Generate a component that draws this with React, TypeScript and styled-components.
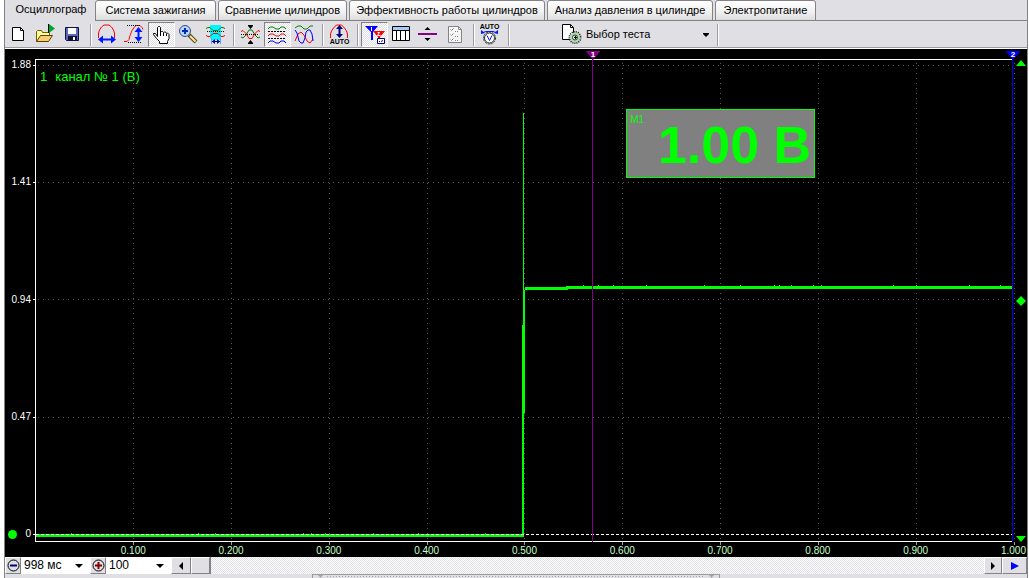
import React from 'react';
import styled, { createGlobalStyle, css } from 'styled-components';

const face = '#e0dfe3';
const line = '#848284';
const green = '#00ff00';
const dither = `repeating-conic-gradient(#fff 0 25%, ${face} 0 50%) 0 0 / 2px 2px`;

const GlobalStyle = createGlobalStyle`
  * { box-sizing: border-box; }
  body { margin: 0; background: #fff; font: 11px/13px "Liberation Sans", Arial, sans-serif; color: #000; }
  button, select { font: inherit; color: inherit; margin: 0; }
  svg { display: block; }
`;

const Window = styled.div`
  display: flex;
  flex-direction: column;
  height: 100vh;
  margin: 0 1px 0 4px;
  background: ${face};
  border: solid ${line};
  border-width: 0 1px;
  overflow: hidden;
`;

const TabBar = styled.div`
  flex: none;
  display: flex;
  gap: 2px;
  height: 21px;
  background: linear-gradient(${line}, ${line}) 90px 100% / 100% 1px no-repeat;
`;

const Tab = styled.button<{ $active?: boolean; $width: number }>`
  width: ${p => p.$width}px;
  height: 21px;
  padding: 0;
  white-space: nowrap;
  border: 1px solid ${line};
  border-radius: 3px 3px 0 0;
  background: linear-gradient(#fff, #f0f0f0 60%, #dcdcdc);
  ${p => p.$active && css`
    border-color: transparent;
    background: ${face};
    padding: 0 0 2px 4px;
  `}
`;

const Toolbar = styled.div`
  flex: none;
  display: flex;
  align-items: center;
  height: 28px;
  border-bottom: 1px solid #fff;
  box-shadow: inset 0 -1px #9c9a9c;
`;

const Tool = styled.button<{ $pressed?: boolean }>`
  width: 27px;
  height: 25px;
  padding: 1px 2px;
  border: 1px solid transparent;
  background: none;
  ${p => p.$pressed && css`
    border-color: ${line} #fff #fff ${line};
    background: ${dither};
  `}
`;

const Divider = styled.span`
  width: 8px;
  height: 22px;
  background: linear-gradient(90deg, #9c9a9c 1px, #fff 1px) 4px 0 / 2px 100% no-repeat;
`;

const TestPicker = styled.label`
  display: flex;
  align-items: center;
  gap: 2px;
  width: 201px;
  padding: 0 4px 0 49px;
`;

const FlatSelect = styled.select<{ $bg: string }>`
  flex: 1;
  min-width: 0;
  height: 17px;
  padding: 0 0 0 2px;
  border: 0;
  border-radius: 0;
  appearance: none;
  background: ${p => p.$bg};
`;

const Combo = styled.span<{ $width: number }>`
  display: flex;
  align-items: center;
  width: ${p => p.$width}px;
  padding: 0 2px 0 1px;
  background: #fff;
  font-size: 12px;
`;

const Scope = styled.main`
  flex: 1;
  min-height: 0;
  display: grid;
  grid-template-columns: 28px minmax(0, 1fr) 12px;
  grid-template-rows: minmax(0, 1fr) 12px;
  padding-top: 10px;
  background: #000;
`;

const YAxis = styled.div`
  display: flex;
  flex-direction: column;
  justify-content: space-between;
  padding: 0 2px 5px 3px;
`;

const YLabel = styled.div`
  display: flex;
  align-items: center;
  justify-content: flex-end;
  height: 12px;
  font-size: 10px;
  line-height: 12px;
  color: #fff;
`;

const ZeroDot = styled.span`
  width: 9px;
  height: 9px;
  margin-right: auto;
  border-radius: 50%;
  background: ${green};
`;

const Plot = styled.div`
  position: relative;
  min-height: 0;
`;

const Flag = styled.svg`
  position: absolute;
  top: -8px;
  transform: translateX(-50%);
`;

const ChannelName = styled.div`
  position: absolute;
  top: 10px;
  left: 7px;
  display: flex;
  gap: 8px;
  font-size: 13px;
  line-height: 15px;
  color: ${green};
`;

const Meter = styled.div`
  position: absolute;
  top: 50px;
  left: 60.4%;
  width: 189px;
  height: 69px;
  padding: 4px 3px;
  border: 1px solid ${green};
  background: #808080;
  color: ${green};
  font-size: 10px;
  line-height: 12px;
`;

const MeterValue = styled.div`
  margin-top: -11px;
  font-size: 52px;
  font-weight: bold;
  line-height: 60px;
  text-align: right;
  white-space: pre;
`;

const Gutter = styled.div`
  display: flex;
  flex-direction: column;
  align-items: center;
  justify-content: space-between;
  padding: 1px 0 3px;
`;

const XAxis = styled.div`
  grid-column: 1 / -1;
  display: flex;
  padding: 0 1px 0 43px;
  font-size: 10px;
  line-height: 12px;
  color: #c6ffc6;
`;

const XLabel = styled.span`
  flex: 1;
  text-align: right;
`;

const BottomBar = styled.div`
  flex: none;
  display: flex;
  height: 17px;
  background: #fff;
`;

const Push = styled.button<{ $width: number }>`
  display: flex;
  align-items: center;
  justify-content: center;
  width: ${p => p.$width}px;
  height: 17px;
  padding: 0;
  border: 1px solid;
  border-color: #fff ${line} ${line} #fff;
  background: ${face};
  box-shadow: 1px 0 ${line};
`;

const Track = styled.div`
  flex: 1;
  display: flex;
  background: ${dither};
`;

const Footer = styled.div`
  flex: none;
  display: flex;
  justify-content: center;
  height: 4px;
`;

const Splitter = styled.div`
  width: 40%;
  height: 4px;
  padding: 1px 5px;
  display: flex;
  align-items: center;
  justify-content: space-between;
  gap: 4px;
  border: 1px solid #9c9a9c;
  border-bottom: 0;
`;

const Dots = styled.span`
  flex: 1;
  height: 1px;
  background: repeating-linear-gradient(90deg, #a5a3ad 0 1px, transparent 1px 3px);
`;

const Icon = ({ children }: { children: React.ReactNode }) => (
  <svg width="21" height="21" viewBox="0 0 21 21" fill="none" stroke="#000" aria-hidden="true">{children}</svg>
);

const autoText = { fontFamily: '"Liberation Sans", Arial, sans-serif', fontSize: 7, fontWeight: 'bold', fill: '#000', stroke: 'none', textAnchor: 'middle' as const };

const NewIcon = () => <Icon><path d="M4.5 3.5h8l3 3v10h-11z" fill="#fff" /><path d="M12.5 3.5v3h3" /></Icon>;
const OpenIcon = () => (
  <Icon>
    <path d="M1.5 17.5v-10l1-1h4l1 2h7v3" fill="#ffff9c" stroke="#7b5a00" />
    <path d="M1.5 17.5l4-6h12l-4 6z" fill="#f7ce73" stroke="#5a4200" />
    <path d="M13.5 9V0" />
    <path d="M14 0l6 4.500-6 4.500z" fill="#00a529" stroke="none" />
  </Icon>
);
const SaveIcon = () => (
  <Icon>
    <path d="M3.5 3.5h13v13h-12l-1-1z" fill="#5a6bbd" stroke="#10103a" />
    <path d="M6 4h8v6H6z" fill="#fff" stroke="none" />
    <path d="M6 12h9v4H6z" fill="#101030" stroke="none" />
    <path d="M11 13h2v3h-2z" fill="#fff" stroke="none" />
  </Icon>
);
const SpanIcon = () => (
  <Icon>
    <path d="M1.5 14V9l1-3 2-3 2.5-2h5l2.500 2 2 3 1 3v5" stroke="#f00" />
    <path d="M4 15.500h12" stroke="#0018ff" strokeWidth="2" />
    <path d="M1 15.500l5-4v8zM19 15.500l-5-4v8z" fill="#0018ff" stroke="none" />
  </Icon>
);
const RiseIcon = () => (
  <Icon>
    <path d="M0 17.500h3l2-2 1-4 2-5 2-3 2-2h4l2 2 1 2" stroke="#f00" />
    <path d="M3 1.500h14M4 18.500h13" strokeDasharray="1 1" />
    <path d="M14.500 6v9" stroke="#0018ff" strokeWidth="2" />
    <path d="M14.500 3l4 5h-8zM14.500 18l4-5h-8z" fill="#0018ff" stroke="none" />
  </Icon>
);
const HandIcon = () => (
  <Icon>
    <path d="M6.500 12.500V3.500l1-1h1l1 1v5l1-1h1l1 1 1-.5h1l1 1.500 1-.5 1.500 1.500v4l-1.500 3v2h-8v-2l-3-3-3-4v-1h2z" fill="#fff" />
    <path d="M9.500 8v4M12.500 9v3M15.500 10v2" />
  </Icon>
);
const ZoomIcon = () => (
  <Icon>
    <path d="M11 11l7 7" stroke="#5a4a18" strokeWidth="4" />
    <path d="M12 12l5.500 5.500" stroke="#ffe79c" strokeWidth="2" />
    <circle cx="7" cy="7" r="5.500" fill="#b5d6ff" stroke="#3a4a84" />
    <path d="M7 4v6M4 7h6" stroke="#0029b5" strokeWidth="2" />
  </Icon>
);
const FilterIcon = () => (
  <Icon>
    <path d="M5 1h11v12l-1 3H6l-1-3z" fill="#00f7ff" stroke="none" />
    <path d="M1 4.500l2-1h2l3 3h5l3-3h2l2 1" stroke="#008000" />
    <path d="M1 11.500l2 1h2l3-3h5l3 3h2l2-1" stroke="#f00" />
    <path d="M2 7.500h17" strokeDasharray="1 1" />
    <path d="M6.500 14v6M15.500 14v6" stroke="#5a9cff" />
    <path d="M7 17.500h8" stroke="#00009c" />
    <path d="M7 17.500l3-2.500v5zM15 17.500l-3-2.500v5z" fill="#00009c" stroke="none" />
  </Icon>
);
const CrossIcon = () => (
  <Icon>
    <path d="M1 13l2 1 3-3 3-5h3l3 5 3 3 2-1" stroke="#008000" />
    <path d="M1 7.500l2-1 3 3 3 5h3l3-5 3-3 2 1" stroke="#f00" />
    <path d="M1 10.500h18" strokeDasharray="1 1" />
    <path d="M8 1h5v1l-2.500 3L8 2zM8 20h5v-1l-2.500-3L8 19z" fill="#000" stroke="none" />
  </Icon>
);
const wave = 'l2-2h3l3 2h3l2-2h3l2 2';
const StackIcon = () => (
  <Icon>
    <path d={`M1 5${wave}`} stroke="#008000" />
    <path d={`M1 12${wave}`} stroke="#f00" />
    <path d={`M1 19${wave}`} stroke="#00f" />
    <path d="M1 7.500h18M1 14.500h18" strokeDasharray="2 1" />
  </Icon>
);
const SineIcon = () => (
  <Icon>
    <path d="M1 4l3-2h3l3 3h3l3-3h3" stroke="#008000" />
    <path d="M1 17l3-7 3-2 3 3 3 6 3 2 3-4" stroke="#f00" />
    <path d="M1 6l2 3 2 8 2 2h2l2-5 1-6 2-2h2l2 4 1 7" stroke="#00f" />
  </Icon>
);
const AutoScaleIcon = () => (
  <Icon>
    <path d="M1.500 14v-4l1-3 2-3 3-3h5l3 3 2 3 1 3v4" stroke="#f00" />
    <path d="M10.500 3v9" stroke="#00007b" strokeWidth="2" />
    <path d="M10.500 1l3.500 4H7zM10.500 14l3.500-4H7z" fill="#00007b" stroke="none" />
    <text x="10.500" y="20" {...autoText}>AUTO</text>
  </Icon>
);
const CursorsIcon = () => (
  <Icon>
    <path d="M1 2h13L9 8v8H7V8z" fill="#00f" stroke="none" />
    <path d="M9 7h12l-5 6v7h-2v-7z" fill="#f00" stroke="none" />
    <path d="M7.500 3v4M13.500 8.500h2l-2 3h3" stroke="#fff" />
    <path d="M13.500 14.500h7v5h-7z" fill="#fff" stroke="#00007b" />
    <path d="M15 17.500h1M17 17.500l2-1" stroke="#00007b" />
  </Icon>
);
const TableIcon = () => (
  <Icon>
    <path d="M1.500 2.500h17v14h-17z" fill="#fff" />
    <path d="M2 3h16v3H2z" fill="#a5cef7" stroke="none" />
    <path d="M1 6.500h18M5.500 6v10M9.500 6v10M14.500 6v10" />
  </Icon>
);
const LevelIcon = () => (
  <Icon>
    <path d="M0 10h19" stroke="#840084" strokeWidth="2" />
    <path d="M9.500 3l3 3h-6zM9.500 17l3-3h-6z" fill="#000" stroke="none" />
  </Icon>
);
const ChecklistIcon = () => (
  <Icon>
    <path d="M3.500 2.500h10l3 3v13h-13z" fill="#f7f7f7" stroke={line} />
    <path d="M13.500 2.500v3h3M5.500 5.500l1 1 2-2M5.500 10.500l1 1 2-2M5.500 15.500l1 1 2-2" stroke={line} />
    <path d="M10 7.500h4M10 12.500h4M10 16.500h4" stroke={line} strokeDasharray="1 1" />
  </Icon>
);
const AutoGaugeIcon = () => (
  <Icon>
    <text x="9.500" y="5" {...autoText}>AUTO</text>
    <circle cx="9.500" cy="14" r="6" stroke="#313131" strokeDasharray="2 1" />
    <circle cx="9.500" cy="14" r="5" fill="#fff" stroke="#313131" />
    <path d="M3 8.500l3-1h7l3 1" stroke="#0018ff" />
    <path d="M1 10V6l4 3zM18 10V6l-4 3z" fill="#0018ff" stroke="none" />
    <path d="M7 11.500l2.500 5 2.500-5" stroke="#0018ff" />
  </Icon>
);
const TestIcon = () => (
  <Icon>
    <path d="M1.500.5h8l3 3v12h-11z" fill="#fff" />
    <path d="M9.500.5v3h3" />
    <circle cx="14" cy="13.500" r="5.500" stroke="#182918" strokeWidth="2" strokeDasharray="1 1" />
    <circle cx="14" cy="13.500" r="4" fill="#b5d6b5" stroke="#b5d6b5" strokeWidth="2" />
    <circle cx="14" cy="13.500" r="2.500" fill="#e7f7e7" stroke="#294229" />
    <path d="M14.500 12v3M13 13.500h3" />
  </Icon>
);

const Arrow = ({ d, w, h, fill = '#000' }: { d: string; w: number; h: number; fill?: string }) => (
  <svg width={w} height={h} viewBox={`0 0 ${w} ${h}`} fill={fill} aria-hidden="true"><path d={d} /></svg>
);

const RoundSign = ({ d, color }: { d: string; color: string }) => (
  <svg width="13" height="13" viewBox="0 0 13 13" fill="none" aria-hidden="true">
    <circle cx="6.500" cy="6.500" r="5.500" stroke="#000" />
    <path d={d} stroke={color} strokeWidth="2" />
  </svg>
);

const tabs: [string, number][] = [
  ['Осциллограф', 88],
  ['Система зажигания', 121],
  ['Сравнение цилиндров', 129],
  ['Эффективность работы цилиндров', 196],
  ['Анализ давления в цилиндре', 166],
  ['Электропитание', 101],
];

const tools: { name: string; icon: React.ReactNode; pressed?: boolean }[][] = [
  [
    { name: 'Новый', icon: <NewIcon /> },
    { name: 'Открыть', icon: <OpenIcon /> },
    { name: 'Сохранить', icon: <SaveIcon /> },
  ],
  [
    { name: 'Развёртка', icon: <SpanIcon /> },
    { name: 'Усиление', icon: <RiseIcon /> },
    { name: 'Рука', icon: <HandIcon />, pressed: true },
    { name: 'Масштаб', icon: <ZoomIcon /> },
    { name: 'Фрагмент', icon: <FilterIcon /> },
  ],
  [
    { name: 'Совместить', icon: <CrossIcon /> },
    { name: 'Разнести', icon: <StackIcon />, pressed: true },
    { name: 'Произвольно', icon: <SineIcon /> },
  ],
  [{ name: 'Автомасштаб', icon: <AutoScaleIcon /> }],
  [
    { name: 'Линейки', icon: <CursorsIcon />, pressed: true },
    { name: 'Таблица', icon: <TableIcon /> },
    { name: 'Уровень', icon: <LevelIcon /> },
    { name: 'Отчёт', icon: <ChecklistIcon /> },
  ],
  [{ name: 'Автонастройка', icon: <AutoGaugeIcon /> }],
];

const volts = ['1.88', '1.41', '0.94', '0.47', '0'];
const seconds = ['0.100', '0.200', '0.300', '0.400', '0.500', '0.600', '0.700', '0.800', '0.900', '1.000'];
const gridX = seconds.map((_, i) => Math.round(100 + i * 97.85) + 0.5);
const gridY = volts.map((_, i) => Math.round(6 + i * 117.2) + 0.5);
const lowNoise = [38, 165, 182, 270, 278, 292, 340, 385, 452];
const highNoise = [550, 565, 580, 613, 671, 707, 741, 746, 758, 780, 788, 860, 883, 936, 967];

const Trace = () => (
  <svg width="100%" height="100%" viewBox="0 0 982 486" preserveAspectRatio="none" fill="none" shapeRendering="crispEdges" role="img" aria-label="Осциллограмма, канал № 1">
    <g stroke="#5a5a5a" strokeDasharray="1 4">
      {gridX.map(x => <path key={x} d={`M${x} 4V482`} />)}
      {gridY.slice(0, 4).map(y => <path key={y} d={`M5 ${y}H979`} />)}
    </g>
    <g stroke="#9c9a9c">{gridX.map(x => <path key={x} d={`M${x} 483v3`} />)}</g>
    <g stroke="#fff">
      {gridY.map(y => <path key={y} d={`M0 ${y}h2`} />)}
      <path d="M979 .5H2.500V482.500H979" />
    </g>
    <g fill={green}>
      <path d="M3 475h484v3H3zM489 266h2v212h-4v-3h2zM490 231h2v123h-2zM492 228h43v3h-43zM533 227h446v3H533zM490 54h1v180h-1z" />
      {lowNoise.map(x => <path key={x} d={`M${x} 474h1v1h-1z`} />)}
      {highNoise.map(x => <path key={x} d={`M${x} 226h1v1h-1z`} />)}
    </g>
    <path d="M3 475.500H979" stroke="#fff" strokeDasharray="3 2" />
    <path d="M559.500 0v483" stroke="#840084" />
    <path d="M979.500 0v483" stroke="#00f" />
  </svg>
);

const CursorFlag = ({ n, at, color }: { n: string; at: string; color: string }) => (
  <Flag width="15" height="9" viewBox="0 0 15 9" style={{ left: at }}>
    <path d="M0 0h15L8 8v1H7V8z" fill={color} />
    <text x="7.500" y="6" fill="#fff" fontSize="8" fontWeight="bold" textAnchor="middle">{n}</text>
  </Flag>
);

export default function App() {
  return (
    <>
      <GlobalStyle />
      <Window>
        <TabBar role="tablist">
          {tabs.map(([name, width], i) => (
            <Tab key={name} role="tab" aria-selected={i === 0} $active={i === 0} $width={width}>{name}</Tab>
          ))}
        </TabBar>
        <Toolbar role="toolbar">
          {tools.map((group, i) => (
            <React.Fragment key={i}>
              {group.map(t => (
                <Tool key={t.name} aria-label={t.name} aria-pressed={t.pressed} $pressed={t.pressed}>{t.icon}</Tool>
              ))}
              <Divider />
            </React.Fragment>
          ))}
          <TestPicker>
            <TestIcon />
            <FlatSelect $bg="transparent" aria-label="Выбор теста"><option>Выбор теста</option></FlatSelect>
            <Arrow d="M0 0h6v1L3 4 0 1z" w={6} h={4} />
          </TestPicker>
          <Divider />
        </Toolbar>

        <Scope>
          <YAxis>
            {volts.map(v => <YLabel key={v}>{v === '0' && <ZeroDot />}{v}</YLabel>)}
          </YAxis>
          <Plot>
            <Trace />
            <CursorFlag n="1" at="57%" color="#840084" />
            <CursorFlag n="2" at="99.8%" color="#00f" />
            <ChannelName><span>1</span><span>канал № 1 (В)</span></ChannelName>
            <Meter>М1<MeterValue>1.00 В</MeterValue></Meter>
          </Plot>
          <Gutter>
            <Arrow d="M5 0l5 6H0z" w={10} h={6} fill={green} />
            <Arrow d="M5 0l5 5-5 5-5-5z" w={10} h={10} fill={green} />
            <Arrow d="M0 0h10L5 6z" w={10} h={6} fill={green} />
          </Gutter>
          <XAxis>{seconds.map(s => <XLabel key={s}>{s}</XLabel>)}</XAxis>
        </Scope>

        <BottomBar>
          <Push $width={16} aria-label="Уменьшить время"><RoundSign d="M3 6.500h7" color="#00007b" /></Push>
          <Combo $width={69}>
            <FlatSelect $bg="#fff" aria-label="Время"><option>998 мс</option></FlatSelect>
            <Arrow d="M0 0h8L4 4z" w={13} h={4} />
          </Combo>
          <Push $width={16} aria-label="Увеличить масштаб"><RoundSign d="M3 6.500h7M6.500 3v7" color="#840000" /></Push>
          <Combo $width={65}>
            <FlatSelect $bg="#fff" aria-label="Масштаб, %"><option>100</option></FlatSelect>
            <Arrow d="M0 0h8L4 4z" w={13} h={4} />
          </Combo>
          <Track>
            <Push $width={20} aria-label="Влево"><Arrow d="M4 0v8L0 4z" w={4} h={8} /></Push>
            <Push $width={19} aria-label="Ползунок" />
          </Track>
          <Push $width={18} aria-label="Вправо"><Arrow d="M0 0v8l4-4z" w={4} h={8} /></Push>
          <Push $width={25} aria-label="Пуск"><Arrow d="M0 0v8l8-4z" w={8} h={8} fill="#00f" /></Push>
        </BottomBar>
        <Footer>
          <Splitter>
            <Arrow d="M0 0h5L2.500 3z" w={5} h={3} fill="#a5a3ad" />
            <Dots />
            <Arrow d="M0 0h5L2.500 3z" w={5} h={3} fill="#a5a3ad" />
          </Splitter>
        </Footer>
      </Window>
    </>
  );
}
